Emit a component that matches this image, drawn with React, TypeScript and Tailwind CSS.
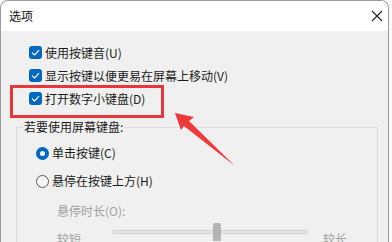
import React from 'react';

const font = { fontFamily: '"Noto Sans CJK SC", "Noto Sans", sans-serif' };

const Checkbox: React.FC = () => (
  <span className="flex h-[13px] w-[13px] shrink-0 items-center justify-center rounded-[3px] bg-[#0067c0]">
    <svg viewBox="0 0 13 13" className="h-[13px] w-[13px]" fill="none">
      <path d="M3.3 6.8 L5.5 9 L9.8 4.4" stroke="white" strokeWidth="1.1" strokeLinecap="round" strokeLinejoin="round" />
    </svg>
  </span>
);

const Radio: React.FC<{ checked?: boolean }> = ({ checked }) =>
  checked ? (
    <span className="flex h-[13px] w-[13px] shrink-0 items-center justify-center rounded-full bg-[#0067c0]">
      <span className="h-[5px] w-[5px] rounded-full bg-white" />
    </span>
  ) : (
    <span className="h-[13px] w-[13px] shrink-0 rounded-full border border-[#5a5a5a] bg-[#f6f6f6]" />
  );

const CheckRow: React.FC<{ label: string }> = ({ label }) => (
  <div className="flex h-[23px] shrink-0 items-center gap-[3px] pl-[28px]">
    <Checkbox />
    <span className="text-[12px] leading-none text-[#1b1b1b]">{label}</span>
  </div>
);

export default function App() {
  return (
    <div className="relative h-[242px] w-[392px] overflow-hidden bg-[#fafafa]" style={font}>
      <div className="mr-[3px] h-[260px] overflow-hidden rounded-tl-[8px] rounded-tr-[8px] border-l border-r border-t border-[#9a9a9a] bg-[#f0f0f0]">
        {/* title bar */}
        <div className="flex h-[30px] items-center justify-between bg-white pl-[8px] pr-[5px]">
          <span className="text-[12px] leading-none text-[#111]">选项</span>
          <svg viewBox="0 0 12 12" className="h-[12px] w-[12px]" fill="none">
            <path d="M1 1 L11 11 M11 1 L1 11" stroke="#222" strokeWidth="1.1" />
          </svg>
        </div>

        {/* body */}
        <div className="flex flex-col pt-[10px]">
          <CheckRow label="使用按键音(U)" />
          <CheckRow label="显示按键以便更易在屏幕上移动(V)" />
          <CheckRow label="打开数字小键盘(D)" />

          <div className="relative ml-[15px] mr-[10px] mt-[17px] border border-[#dcdcdc] pt-[11px]">
            <span className="absolute -top-[8px] left-[6px] bg-[#f0f0f0] px-[1px] text-[12px] leading-[14px] text-[#1b1b1b]">
              若要使用屏幕键盘:
            </span>
            <div className="flex h-[28px] items-center gap-[3px] pl-[19px]">
              <Radio checked />
              <span className="text-[12px] leading-none text-[#1b1b1b]">单击按键(C)</span>
            </div>
            <div className="flex h-[28px] items-center gap-[3px] pl-[19px]">
              <Radio />
              <span className="text-[12px] leading-none text-[#1b1b1b]">悬停在按键上方(H)</span>
            </div>
            <div className="mt-[4px] flex h-[24px] items-center pl-[40px]">
              <span className="text-[12px] leading-none text-[#a2a2a2]">悬停时长(O):</span>
            </div>
            <div className="flex h-[30px] items-start pl-[40px] pt-[6px]">
              <span className="mt-[4px] w-[55px] text-[12px] leading-none text-[#a2a2a2]">较短</span>
              <div className="relative mt-[1px] h-[4px] w-[196px] rounded-[1px] border border-[#d4d4d4] bg-[#e4e4e4]">
                <span className="absolute -top-[8px] left-[100px] h-[18px] w-[8px] rounded-t-[2px] bg-[#b4b4b4]" />
              </div>
              <span className="ml-[15px] mt-[4px] text-[12px] leading-none text-[#a2a2a2]">较长</span>
            </div>
          </div>
        </div>
      </div>

      {/* annotation overlay */}
      <div className="absolute left-[10px] top-[85px] h-[33px] w-[154px] border-[3px] border-[#e8373b]" />
      <svg className="absolute left-0 top-0 h-[242px] w-[392px]" viewBox="0 0 392 242">
        <polygon points="175,113 194,117 189,121 235,166 184,126 181,130" fill="#f03a3a" />
      </svg>
    </div>
  );
}
